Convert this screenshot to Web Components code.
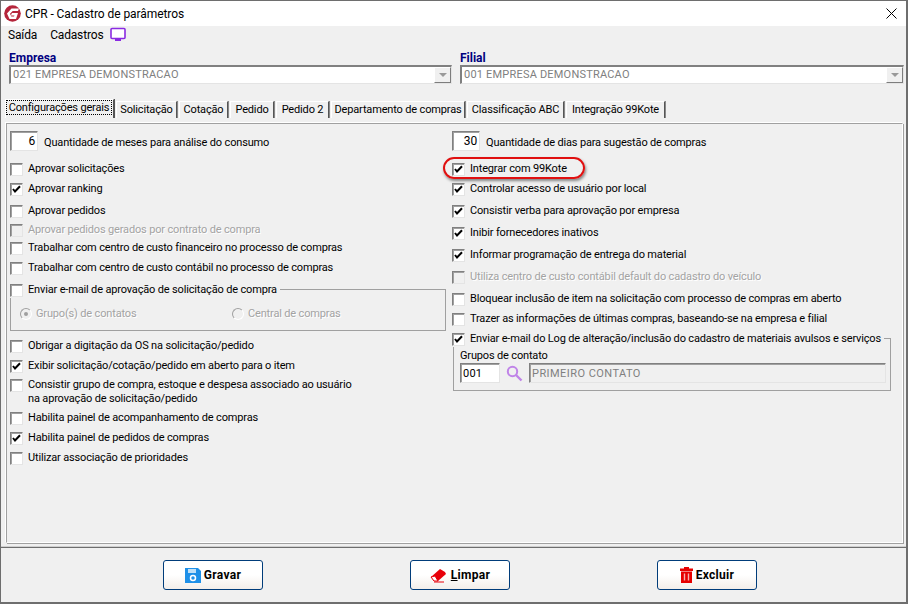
<!DOCTYPE html>
<html lang="pt"><head><meta charset="utf-8"><title>CPR</title>
<style>
html,body{margin:0;padding:0;background:#f0f0f0;font:11px Roboto,"Liberation Sans",sans-serif;letter-spacing:-.16px;color:#000}
</style></head><body>
<x-window>
  <x-titlebar>CPR - Cadastro de parâmetros</x-titlebar>
  <x-menubar></x-menubar>
  <x-fields></x-fields>
  <x-tabs></x-tabs>
  <x-panel>
    <div slot="left">
      <x-spin value="6" style="margin-top:7px">Quantidade de meses para análise do consumo</x-spin>
      <x-check style="margin-top:11px">Aprovar solicitações</x-check>
      <x-check checked style="margin-top:6px">Aprovar ranking</x-check>
      <x-check style="margin-top:8px">Aprovar pedidos</x-check>
      <x-check disabled style="margin-top:5px">Aprovar pedidos gerados por contrato de compra</x-check>
      <x-check style="margin-top:4px">Trabalhar com centro de custo financeiro no processo de compras</x-check>
      <x-check style="margin-top:6px">Trabalhar com centro de custo contábil no processo de compras</x-check>
      <x-group style="margin-top:8px;width:436px;--h:33px">
        <x-check slot="legend">Enviar e-mail de aprovação de solicitação de compra</x-check>
        <x-radios></x-radios>
      </x-group>
      <x-check style="margin-top:8px">Obrigar a digitação da OS na solicitação/pedido</x-check>
      <x-check checked style="margin-top:6px">Exibir solicitação/cotação/pedido em aberto para o item</x-check>
      <x-check style="margin-top:5px">Consistir grupo de compra, estoque e despesa associado ao usuário<br>na aprovação de solicitação/pedido</x-check>
      <x-check style="margin-top:5px">Habilita painel de acompanhamento de compras</x-check>
      <x-check checked style="margin-top:6px">Habilita painel de pedidos de compras</x-check>
      <x-check style="margin-top:6px">Utilizar associação de prioridades</x-check>
    </div>
    <div slot="right">
      <x-spin value="30" style="margin-top:7px">Quantidade de dias para sugestão de compras</x-spin>
      <x-check checked style="margin-top:11px">Integrar com 99Kote</x-check>
      <x-check checked style="margin-top:6px">Controlar acesso de usuário por local</x-check>
      <x-check checked style="margin-top:8px">Consistir verba para aprovação por empresa</x-check>
      <x-check checked style="margin-top:8px">Inibir fornecedores inativos</x-check>
      <x-check checked style="margin-top:8px">Informar programação de entrega do material</x-check>
      <x-check disabled style="margin-top:8px">Utiliza centro de custo contábil default do cadastro do veículo</x-check>
      <x-check style="margin-top:8px">Bloquear inclusão de item na solicitação com processo de compras em aberto</x-check>
      <x-check style="margin-top:6px">Trazer as informações de últimas compras, baseando-se na empresa e filial</x-check>
      <x-group inset style="margin-top:6px;width:439px;--h:44px">
        <x-check checked slot="legend">Enviar e-mail do Log de alteração/inclusão do cadastro de materiais avulsos e serviços</x-check>
        <x-contact></x-contact>
      </x-group>
    </div>
    <x-ring></x-ring>
  </x-panel>
  <x-footer></x-footer>
</x-window>
<script>
function def(name, css, html){
  customElements.define(name, class extends HTMLElement{
    connectedCallback(){
      if(this.shadowRoot) return;
      const s=this.attachShadow({mode:'open'});
      s.innerHTML='<style>'+css+'</style>'+(typeof html==='function'?html(this):html);
    }
  });
}
const FRAME='border-style:solid;border-width:1px;border-color:#808080 #e4e4e4 #e4e4e4 #808080;box-shadow:inset 1px 1px 0 #a0a0a0;box-sizing:border-box;background:#fff;';

def('x-window',`:host{display:flex;flex-direction:column;width:908px;height:604px;box-sizing:border-box;border:1px solid #6e6e6e;border-width:1px 2px 2px 1px;background:#f0f0f0;overflow:hidden}`,'<slot></slot>');

def('x-titlebar',`:host{display:flex;align-items:center;height:25px;background:#fff;font-size:12px;letter-spacing:-.07px;flex:none}
svg{margin:0 4px 0 3px;flex:none} span{flex:1} .x{margin:0 9px 0 0}`,
`<svg width="17" height="17" viewBox="0 0 17 17"><circle cx="8.500" cy="8.500" r="8.300" fill="#b5253b"/><path d="M15 3.500H7.500L3 8.500 5.500 14H12L14 8H8L6.800 10.500H10.500L10 11.500H7.300L6 8.800 8.700 6H14Z" fill="#fff"/></svg><span><slot></slot></span>
<svg class="x" width="11" height="11" viewBox="0 0 11 11"><path d="M.5.5l10 10M10.500.5l-10 10" stroke="#000" fill="none"/></svg>`);

def('x-menubar',`:host{display:flex;align-items:center;height:17px;padding:0 0 0 7px;gap:13px;flex:none;font-size:12px}
svg{margin-left:-6px}`,
`<span>Saída</span><span>Cadastros</span><svg width="17" height="15" viewBox="0 0 17 15"><rect x="1" y="1.500" width="14" height="10" rx="1" fill="#fff" stroke="#8a2be2" stroke-width="1.600"/><rect x="5" y="12" width="6" height="2" fill="#8a2be2"/></svg>`);

def('x-combo',`:host{display:block}
label{display:block;color:#000080;font-weight:700;font-size:12px;line-height:13px;height:13px;letter-spacing:0}
.b{display:flex;align-items:center;height:19px;${FRAME}color:#808080;padding-left:2px;letter-spacing:.2px;border-width:2px 1px 1px 2px;box-shadow:none}
.b span{flex:1;white-space:nowrap;margin-top:-2px}
.a{width:17px;height:16px;background:#f0f0f0;border:1px solid;border-color:#fff #7d7d7d #7d7d7d #fff;box-sizing:border-box;display:flex;align-items:center;justify-content:center}
.a:after{content:"";border:4px solid transparent;border-top:4px solid #999;border-bottom:0}`,
t=>`<label>${t.getAttribute('label')}</label><div class="b"><span>${t.getAttribute('value')}</span><div class="a"></div></div>`);

def('x-fields',`:host{display:grid;grid-template-columns:443px 444px;gap:8px;padding:9px 0 0 8px;box-sizing:border-box;flex:none;height:56px}`,
`<x-combo label="Empresa" value="021 EMPRESA DEMONSTRACAO"></x-combo><x-combo label="Filial" value="001 EMPRESA DEMONSTRACAO"></x-combo>`);

def('x-tabs',`:host{display:flex;align-items:flex-end;height:19px;padding:0 0 0 4px;gap:2px;flex:none;white-space:nowrap}
.t{height:17px;box-sizing:border-box;border:1px solid;border-color:#fff #555 transparent #fff;display:flex;align-items:center;justify-content:center;line-height:14px;box-shadow:1px 0 0 #888;border-bottom:0}
.s{height:19px;width:109px;justify-content:center;box-shadow:1px 0 0 #555;padding-bottom:3px}
.s span{outline:1px dotted #000;padding:0 2px;line-height:13px;margin-right:1px}`,
`<div class="t s"><span>Configurações gerais</span></div>
<div class="t" style="width:61px">Solicitação</div><div class="t" style="width:49px">Cotação</div><div class="t" style="width:44px">Pedido</div><div class="t" style="width:53px">Pedido 2</div><div class="t" style="width:134px">Departamento de compras</div><div class="t" style="width:97px">Classificação ABC</div><div class="t" style="width:99px">Integração 99Kote</div>`);

def('x-panel',`:host{display:block;position:relative;flex:none;height:420px;margin:5px 3px 0 5px;border:1px solid #a0a0a0;border-right-color:#fff;border-bottom-color:#fff;box-sizing:border-box;box-shadow:1px 1px 0 #a0a0a0,-1px -1px 0 #fff}
.g{display:grid;grid-template-columns:442px 1fr;height:100%}
.c{padding-left:3px}
.r{padding-left:3px}`,
`<div class="g"><div class="c"><slot name="left"></slot></div><div class="r"><slot name="right"></slot></div></div><slot></slot>`);

def('x-check',`:host{display:flex;align-items:flex-start;gap:5px;line-height:14px;min-height:14px}
.k{width:13px;height:13px;flex:none;${FRAME}display:block;margin-top:1px}
svg{display:block}
:host([disabled]) .k{background:#f0f0f0}
:host([disabled]) span{color:#a3a3a3;text-shadow:1px 1px 0 #fff}
span{white-space:nowrap}`,
t=>`<div class="k">${t.hasAttribute('checked')?'<svg width="11" height="11" viewBox="0 0 11 11"><path d="M2 5l2 2.500L9 2.200" fill="none" stroke="#000" stroke-width="2"/></svg>':''}</div><span><slot></slot></span>`);

def('x-spin',`:host{display:flex;align-items:center;gap:6px;height:20px}
.i{width:28px;height:20px;${FRAME}text-align:right;padding:0 2px;font-size:12px;line-height:19px}
span{white-space:nowrap;margin-top:2px}`,
t=>`<div class="i">${t.getAttribute('value')}</div><span><slot></slot></span>`);

def('x-group',`:host{display:block}
:host([inset]) .b{margin-left:1px}
.h{display:flex;align-items:flex-start}
.l{flex:1;margin:6px 0 0 3px;height:8px;border-top:1px solid #a0a0a0;border-right:1px solid #a0a0a0}
.b{border:1px solid #a0a0a0;border-top:0;height:var(--h);box-sizing:border-box}`,
`<div class="h"><slot name="legend"></slot><div class="l"></div></div><div class="b"><slot></slot></div>`);

def('x-radios',`:host{display:flex;padding:9px 0 0 9px;color:#a3a3a3;text-shadow:1px 1px 0 #fff}
.o{display:flex;align-items:center;gap:4px;line-height:14px}
.d{width:12px;height:12px;border-radius:50%;border:1px solid #a0a0a0;border-right-color:#fff;border-bottom-color:#fff;box-sizing:border-box;background:#f0f0f0;display:flex;align-items:center;justify-content:center}
.d i{width:4px;height:4px;border-radius:50%;background:#a0a0a0}`,
`<div class="o" style="width:212px"><div class="d"><i></i></div>Grupo(s) de contatos</div><div class="o"><div class="d"></div>Central de compras</div>`);

def('x-contact',`:host{display:block;padding:0 0 0 6px}
.t{line-height:13px;padding-top:2px}
.r{display:flex;align-items:center;margin-top:1px}
.c{width:40px;height:20px;${FRAME}padding:0 2px;line-height:20px;letter-spacing:.2px}
svg{margin:0 6px}
.n{width:357px;height:20px;${FRAME}background:#f0f0f0;color:#808080;padding:0 2px;line-height:20px;letter-spacing:.45px}`,
`<div class="t">Grupos de contato</div><div class="r"><div class="c">001</div><svg width="17" height="17" viewBox="0 0 17 17"><circle cx="6.500" cy="6.500" r="4.700" fill="none" stroke="#c084e8" stroke-width="2"/><path d="M10 10l5.500 5.500" stroke="#c084e8" stroke-width="2.400"/></svg><div class="n">PRIMEIRO CONTATO</div></div>`);

def('x-ring',`:host{position:absolute;left:436px;top:33px;width:142px;height:22px;box-sizing:border-box;border:2px solid #e01010;border-radius:11px;box-shadow:1px 2px 3px rgba(0,0,0,.45)}`,'');

def('x-button',`:host{display:flex;align-items:center;justify-content:center;gap:3px;width:100px;height:30px;box-sizing:border-box;border:1px solid #003c7a;border-radius:3px;background:linear-gradient(#fff,#fff 50%,#f3eeea);font-weight:700;font-size:12px;letter-spacing:.3px}`,`<slot name="i"></slot><slot></slot>`);

def('x-footer',`:host{display:flex;gap:147px;flex:none;border-top:1px solid #6e6e6e;box-shadow:0 -1px 0 #d0d0d0;padding:12px 0 0 162px;margin-top:4px;height:54px;box-sizing:border-box}`,
`<x-button><svg slot="i" width="16" height="16" viewBox="0 0 16 16"><path d="M0 1h13l3 3v12H0z" fill="#1e90e8"/><rect x="3" y="2" width="8" height="4" fill="#bfe0f8"/><circle cx="8" cy="11" r="2.500" fill="none" stroke="#fff" stroke-width="1.500"/></svg>Gravar</x-button>
<x-button><svg slot="i" width="18" height="16" viewBox="0 0 18 16"><path d="M1 10L10 2l5 3 1 2-8 7H4z" fill="#e8000a"/><path d="M1 10l3 4h4L5 9z" fill="#fff" stroke="#e8000a"/><path d="M4 15h10" stroke="#e8000a"/></svg><span><u>L</u>impar</span></x-button>
<x-button><svg slot="i" width="13" height="16" viewBox="0 0 13 16"><path d="M4 0h5v1.500h4V4H0V1.500h4zM1 4.500h11V16H1z" fill="#e60000"/><path d="M4.500 6.500v7M8.500 6.500v7" stroke="#f6b0b0" stroke-width="1.400"/></svg>Excluir</x-button>`);
</script>
</body></html>
